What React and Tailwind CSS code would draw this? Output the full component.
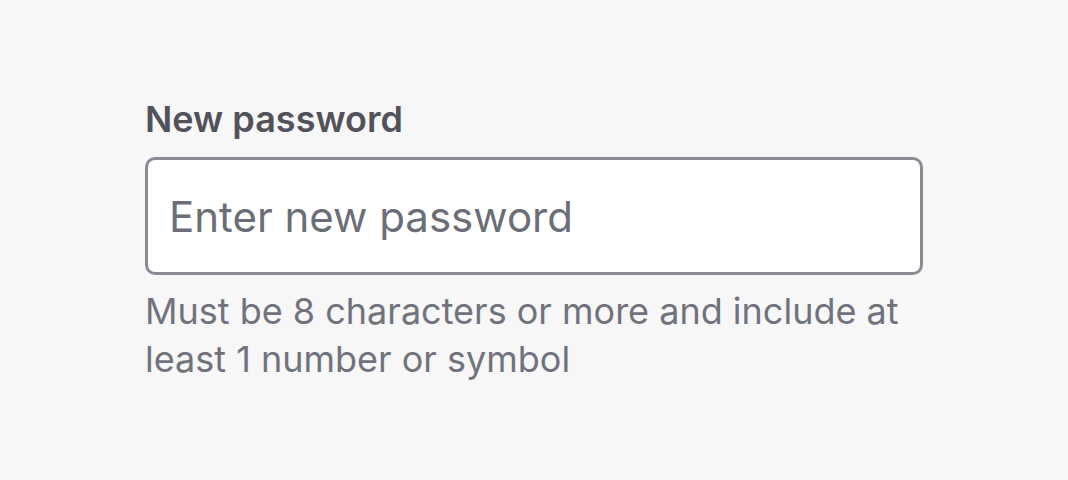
export default function App() {
  return (
    <div className="h-[480px] w-full bg-[#f7f7f8] pl-[145px] pt-[97px]" style={{ fontFamily: 'Inter, "Noto Sans", sans-serif' }}>
      <div className="flex w-[778px] flex-col">
        <label className="text-[36px] font-semibold leading-[44px] text-[#52525b]">New password</label>
        <input
          type="password"
          placeholder="Enter new password"
          className="mt-[16px] h-[118px] w-full rounded-[10px] border-[3px] border-[#8a8c95] bg-white px-[21px] text-[42px] text-[#3f3f46] outline-none placeholder:text-[#6b6e76]"
        />
        <p className="mt-[12px] text-[36px] leading-[48px] text-[#71737c]">
          Must be 8 characters or more and include at least 1 number or symbol
        </p>
      </div>
    </div>
  );
}
